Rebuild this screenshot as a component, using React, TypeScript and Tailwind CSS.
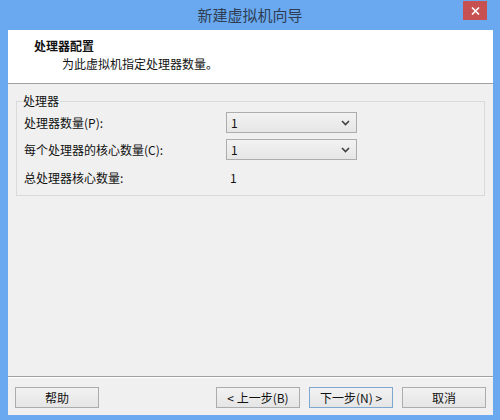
const font = { fontFamily: '"Noto Sans CJK SC", "Noto Sans", sans-serif' };

function Combo({ value }: { value: string }) {
  return (
    <div className="flex h-[21px] w-[131px] items-center justify-between border border-[#acacac] bg-gradient-to-b from-[#f2f2f2] to-[#e6e6e6] pl-[4px] pr-[6px] text-[12px] text-[#111]">
      <span>{value}</span>
      <svg width="9" height="6" viewBox="0 0 9 6">
        <path d="M1 1l3.5 3.5L8 1" fill="none" stroke="#404040" strokeWidth="1.6" />
      </svg>
    </div>
  );
}

function Btn({ label, primary }: { label: string; primary?: boolean }) {
  return (
    <button
      className={
        primary
          ? "h-[21px] w-[84px] border border-[#7fa7cf] bg-gradient-to-b from-[#f2f2f2] to-[#e5e5e5] text-[12px] text-[#111]"
          : "h-[21px] w-[84px] border border-[#acacac] bg-gradient-to-b from-[#f2f2f2] to-[#e5e5e5] text-[12px] text-[#111]"
      }
    >
      {label}
    </button>
  );
}

export default function App() {
  return (
    <div className="flex h-[420px] w-[500px] flex-col bg-[#6aa9f0]" style={font}>
      {/* title bar */}
      <div className="relative flex h-[30px] items-center justify-center">
        <span className="text-[15px] text-[#2e3d52]">新建虚拟机向导</span>
        <div className="absolute right-[13px] top-[1px] flex h-[19px] w-[24px] items-center justify-center bg-[#c75050]">
          <svg width="9" height="8" viewBox="0 0 9 8">
            <path d="M1 0.5l7 7M8 0.5l-7 7" stroke="#fff" strokeWidth="1.6" />
          </svg>
        </div>
      </div>

      <div className="mb-[5px] ml-[8px] mr-[7px] flex flex-1 flex-col bg-[#f0f0f0]">
        {/* header */}
        <div className="h-[54px] border-b border-[#a0a0a0] bg-white pl-[26px] pt-[7px]">
          <div className="text-[12px] font-bold leading-[18px] text-[#111]">处理器配置</div>
          <div className="pl-[28px] text-[12px] leading-[18px] text-[#111]">为此虚拟机指定处理器数量。</div>
        </div>

        {/* body */}
        <div className="flex-1 px-[8px] pt-[9px]">
          <fieldset className="h-[103px] border border-[#dadada] pl-[7px]">
            <legend className="ml-[-2px] px-[1px] text-[12px] leading-[16px] text-[#111]">处理器</legend>
            <div className="flex flex-col text-[12px] text-[#111]">
              <div className="mt-[3px] flex h-[21px] items-center">
                <span className="w-[202px]">处理器数量(P):</span>
                <Combo value="1" />
              </div>
              <div className="mt-[6px] flex h-[21px] items-center">
                <span className="w-[202px]">每个处理器的核心数量(C):</span>
                <Combo value="1" />
              </div>
              <div className="mt-[7px] flex h-[21px] items-center">
                <span className="w-[206px]">总处理器核心数量:</span>
                <span>1</span>
              </div>
            </div>
          </fieldset>
        </div>

        {/* footer */}
        <div className="border-t border-[#a0a0a0]">
          <div className="flex items-center border-t border-white px-[7px] pb-[7px] pt-[9px]">
            <Btn label="帮助" />
            <div className="ml-auto flex gap-[9px]">
              <Btn label="< 上一步(B)" />
              <Btn label="下一步(N) >" primary />
              <Btn label="取消" />
            </div>
          </div>
        </div>
      </div>
    </div>
  );
}
